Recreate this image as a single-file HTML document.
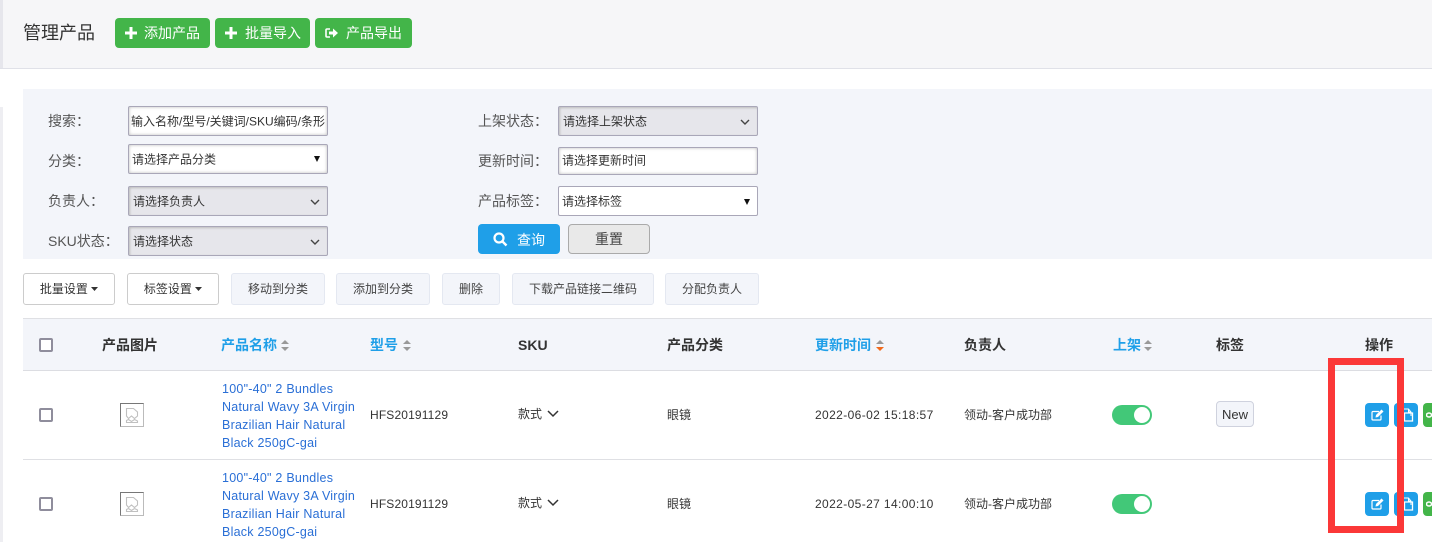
<!DOCTYPE html>
<html lang="zh"><head><meta charset="utf-8"><style>
*{box-sizing:border-box}
html,body{margin:0;padding:0;width:1432px;height:542px;overflow:hidden;background:#fff}
body{position:relative;font-family:"Liberation Sans","Noto Sans CJK SC",sans-serif;font-size:12px;color:#333}
.a{position:absolute;white-space:nowrap}
.g{background:#43b549;color:#fff;border-radius:4px;height:30px;top:18px;font-size:14px;line-height:30px}
.g span{position:absolute;top:0}
.lb{font-size:14px;color:#555;line-height:20px}
.f{position:absolute;width:200px;border:1px solid #a9a7b8;border-radius:2px;font-size:12px;color:#333;background:#fff;box-shadow:inset 0 0 3px #bbb}
.f span{position:absolute;top:50%;transform:translateY(-50%);white-space:nowrap}
.sel{background:#e6e6eb;box-shadow:inset 1px 1px 2px #bbb}
.t{position:absolute;top:273px;height:32px;border:1px solid #e4e8f1;border-radius:3px;background:#f3f5fa;text-align:center;line-height:30px;font-size:12px;color:#444;white-space:nowrap}
.w{background:#fff;border-color:#ccc;color:#333}
.th{position:absolute;top:336px;font-size:14px;font-weight:bold;color:#333;line-height:18px;white-space:nowrap}
.bl{color:#1f9fe8}
.sort{position:absolute;width:8px;height:11px;top:340px}
.sort:before,.sort:after{content:"";position:absolute;left:0;border-left:4px solid transparent;border-right:4px solid transparent}
.sort:before{top:0;border-bottom:4.5px solid #999}
.sort:after{bottom:0;border-top:4.5px solid #999}
.sort.o:after{border-top-color:#f26a1b}
.cb{position:absolute;left:39px;width:14px;height:14px;border:2px solid #8f8d9c;border-radius:2px;background:#fff}
.nm{position:absolute;left:222px;width:140px;font-size:12.5px;letter-spacing:.24px;line-height:18px;color:#2a6fd6;white-space:nowrap}
.c{position:absolute;font-size:12px;color:#333;line-height:18px;white-space:nowrap}
.d{letter-spacing:.38px}
.sw{position:absolute;left:1112px;width:40px;height:20px;border-radius:10px;background:#42c878}
.sw:after{content:"";position:absolute;right:2px;top:2px;width:16px;height:16px;border-radius:50%;background:#fff}
.op{position:absolute;width:24px;height:24px;border-radius:4px;background:#1f9fe8}
.line{position:absolute;left:23px;width:1409px;height:1px;background:#dfe0e4}
.ic{position:absolute;left:120px;width:24px;height:24px}
</style></head><body>
<div class="a" style="left:0;top:0;width:1432px;height:69px;background:#f6f6f8;border-bottom:1px solid #e0e1e8"></div>
<div class="a" style="left:0;top:0;width:3px;height:68px;background:#e6e6ec"></div>
<div class="a" style="left:0;top:107px;width:3px;height:435px;background:#eeeef2"></div>
<div class="a" style="left:23px;top:21px;font-size:18px;line-height:24px;color:#333">管理产品</div>

<div class="a g" style="left:115px;width:95px"><svg class="a" style="left:10px;top:9px" width="12" height="12"><path d="M0 6H12M6 0V12" stroke="#fff" stroke-width="3"/></svg><span style="left:29px">添加产品</span></div>
<div class="a g" style="left:215px;width:95px"><svg class="a" style="left:10px;top:9px" width="12" height="12"><path d="M0 6H12M6 0V12" stroke="#fff" stroke-width="3"/></svg><span style="left:30px">批量导入</span></div>
<div class="a g" style="left:315px;width:97px"><svg class="a" style="left:10px;top:9px" width="14" height="12"><path d="M5 2H2Q1 2 1 3V9Q1 10 2 10H5" fill="none" stroke="#fff" stroke-width="1.6"/><path d="M4 4.5H8V1.5L13 6L8 10.500V7.500H4Z" fill="#fff"/></svg><span style="left:31px">产品导出</span></div>

<div class="a" style="left:23px;top:89px;width:1409px;height:170px;background:#f3f5fa"></div>
<div class="a lb" style="left:48px;top:111px">搜索：</div>
<div class="a lb" style="left:48px;top:151px">分类：</div>
<div class="a lb" style="left:48px;top:191px">负责人：</div>
<div class="a lb" style="left:48px;top:231px">SKU状态：</div>
<div class="a lb" style="left:478px;top:111px">上架状态：</div>
<div class="a lb" style="left:478px;top:151px">更新时间：</div>
<div class="a lb" style="left:478px;top:191px">产品标签：</div>

<div class="f" style="left:128px;top:106px;height:30px;overflow:hidden"><span style="left:2px;width:194px;overflow:hidden">输入名称/型号/关键词/SKU编码/条形码</span></div>
<div class="f" style="left:128px;top:144px;height:30px"><span style="left:3px">请选择产品分类</span><svg class="a" style="right:7px;top:11px" width="6" height="6"><path d="M0 0H6L3 6Z" fill="#111"/></svg></div>
<div class="f sel" style="left:128px;top:186px;height:30px"><span style="left:4px">请选择负责人</span><svg class="a" style="right:7px;top:12px" width="10" height="7"><path d="M1 1L5 5L9 1" fill="none" stroke="#444" stroke-width="1.400"/></svg></div>
<div class="f sel" style="left:128px;top:226px;height:30px"><span style="left:4px">请选择状态</span><svg class="a" style="right:7px;top:12px" width="10" height="7"><path d="M1 1L5 5L9 1" fill="none" stroke="#444" stroke-width="1.400"/></svg></div>
<div class="f sel" style="left:558px;top:106px;height:30px"><span style="left:4px">请选择上架状态</span><svg class="a" style="right:7px;top:12px" width="10" height="7"><path d="M1 1L5 5L9 1" fill="none" stroke="#444" stroke-width="1.400"/></svg></div>
<div class="f" style="left:558px;top:147px;height:28px"><span style="left:3px;margin-top:-1px">请选择更新时间</span></div>
<div class="f" style="left:558px;top:186px;height:30px;box-shadow:none"><span style="left:3px">请选择标签</span><svg class="a" style="right:7px;top:12px" width="6" height="6"><path d="M0 0H6L3 6Z" fill="#111"/></svg></div>

<div class="a" style="left:478px;top:224px;width:82px;height:30px;background:#1f9fe8;border-radius:4px;color:#fff;font-size:14px;line-height:30px"><svg class="a" style="left:15px;top:8px" width="15" height="15"><circle cx="6" cy="6" r="4.500" fill="none" stroke="#fff" stroke-width="2.200"/><path d="M9.500 9.500L13.500 13.500" stroke="#fff" stroke-width="2.400"/></svg><span style="position:absolute;left:39px;top:1px">查询</span></div>
<div class="a" style="left:568px;top:224px;width:82px;height:30px;background:#e9e9e9;border:1px solid #aaa;border-radius:4px;color:#444;font-size:14px;line-height:29px;text-align:center">重置</div>

<div class="t w" style="left:23px;width:92px">批量设置 <svg width="7" height="4" style="vertical-align:2px"><path d="M0 0H7L3.500 4Z" fill="#333"/></svg></div>
<div class="t w" style="left:127px;width:92px">标签设置 <svg width="7" height="4" style="vertical-align:2px"><path d="M0 0H7L3.500 4Z" fill="#333"/></svg></div>
<div class="t" style="left:231px;width:94px">移动到分类</div>
<div class="t" style="left:336px;width:94px">添加到分类</div>
<div class="t" style="left:442px;width:58px">删除</div>
<div class="t" style="left:512px;width:142px">下载产品链接二维码</div>
<div class="t" style="left:665px;width:94px">分配负责人</div>

<div class="a" style="left:23px;top:318px;width:1409px;height:53px;background:#f3f5fa;border-top:1px solid #dfe0e4;border-bottom:1px solid #dcdde2"></div>
<div class="cb" style="top:338px"></div>
<div class="th" style="left:102px">产品图片</div>
<div class="th bl" style="left:221px">产品名称</div><i class="sort" style="left:281px"></i>
<div class="th bl" style="left:370px">型号</div><i class="sort" style="left:403px"></i>
<div class="th" style="left:518px;font-size:14px">SKU</div>
<div class="th" style="left:667px">产品分类</div>
<div class="th bl" style="left:815px">更新时间</div><i class="sort o" style="left:876px"></i>
<div class="th" style="left:964px">负责人</div>
<div class="th bl" style="left:1113px">上架</div><i class="sort" style="left:1144px"></i>
<div class="th" style="left:1216px">标签</div>
<div class="th" style="left:1365px">操作</div>

<div class="line" style="top:459px"></div>

<div class="cb" style="top:408px"></div>
<svg class="ic" style="top:403px" viewBox="0 0 24 24"><rect x=".5" y=".5" width="23" height="23" fill="#fff" stroke="#bbb"/><path d="M.5 23.500V.5H23.500" fill="none" stroke="#777"/><path d="M6.500 13V5.500H13.500L17.500 9V13L14.500 15.500L11.500 13L8.500 15.500ZM6.500 17.500L8.500 16.500L11.500 18.500L14.500 16.500L17.500 18V19.500H6.500Z" fill="none" stroke="#c0c0c0" stroke-width="1.100"/></svg>
<div class="nm" style="top:380px">100"-40" 2 Bundles<br>Natural Wavy 3A Virgin<br>Brazilian Hair Natural<br>Black 250gC-gai</div>
<div class="c" style="left:370px;top:406px;letter-spacing:.15px">HFS20191129</div>
<div class="c" style="left:518px;top:405px">款式</div>
<svg class="a" style="left:547px;top:410px" width="12" height="8"><path d="M1 1L6 6L11 1" fill="none" stroke="#333" stroke-width="1.500"/></svg>
<div class="c" style="left:667px;top:406px">眼镜</div>
<div class="c d" style="left:815px;top:406px">2022-06-02 15:18:57</div>
<div class="c" style="left:964px;top:406px">领动-客户成功部</div>
<div class="sw" style="top:405px"></div>
<div class="a" style="left:1216px;top:401px;width:38px;height:26px;background:#f3f5fa;border:1px solid #cfd2de;border-radius:4px;text-align:center;line-height:25px;font-size:13px;color:#333">New</div>

<div class="cb" style="top:497px"></div>
<svg class="ic" style="top:492px" viewBox="0 0 24 24"><rect x=".5" y=".5" width="23" height="23" fill="#fff" stroke="#bbb"/><path d="M.5 23.500V.5H23.500" fill="none" stroke="#777"/><path d="M6.500 13V5.500H13.500L17.500 9V13L14.500 15.500L11.500 13L8.500 15.500ZM6.500 17.500L8.500 16.500L11.500 18.500L14.500 16.500L17.500 18V19.500H6.500Z" fill="none" stroke="#c0c0c0" stroke-width="1.100"/></svg>
<div class="nm" style="top:469px">100"-40" 2 Bundles<br>Natural Wavy 3A Virgin<br>Brazilian Hair Natural<br>Black 250gC-gai</div>
<div class="c" style="left:370px;top:495px;letter-spacing:.15px">HFS20191129</div>
<div class="c" style="left:518px;top:494px">款式</div>
<svg class="a" style="left:547px;top:499px" width="12" height="8"><path d="M1 1L6 6L11 1" fill="none" stroke="#333" stroke-width="1.500"/></svg>
<div class="c" style="left:667px;top:495px">眼镜</div>
<div class="c d" style="left:815px;top:495px">2022-05-27 14:00:10</div>
<div class="c" style="left:964px;top:495px">领动-客户成功部</div>
<div class="sw" style="top:494px"></div>

<div class="op" style="left:1365px;top:403px"><svg class="a" style="left:6px;top:6px" width="13" height="12"><path d="M8 2.500H2Q1 2.500 1 3.500V10Q1 11 2 11H9Q10 11 10 10V6.500" fill="none" stroke="#fff" stroke-width="1.200"/><path d="M4.500 8.500L5 6L10.500 .5L12.500 2.500L7 8Z" fill="#fff"/></svg></div>
<div class="op" style="left:1394px;top:403px"><svg class="a" style="left:6px;top:3px" width="14" height="16"><path d="M1 3H8.500L11 6V10M8.500 3V6H11" fill="none" stroke="#fff" stroke-width="1"/><path d="M4.500 8H12.500V16H4.500Z" transform="translate(0 -1)" fill="none" stroke="#fff" stroke-width="1.300"/></svg></div>
<div class="op" style="left:1423px;top:403px;background:#43b549;width:20px"><svg class="a" style="left:3px;top:7px" width="6" height="10"><ellipse cx="3" cy="5" rx="2.500" ry="2" fill="none" stroke="#fff" stroke-width="1.500"/></svg></div>
<div class="op" style="left:1365px;top:492px"><svg class="a" style="left:6px;top:6px" width="13" height="12"><path d="M8 2.500H2Q1 2.500 1 3.500V10Q1 11 2 11H9Q10 11 10 10V6.500" fill="none" stroke="#fff" stroke-width="1.200"/><path d="M4.500 8.500L5 6L10.500 .5L12.500 2.500L7 8Z" fill="#fff"/></svg></div>
<div class="op" style="left:1394px;top:492px"><svg class="a" style="left:6px;top:3px" width="14" height="16"><path d="M1 3H8.500L11 6V10M8.500 3V6H11" fill="none" stroke="#fff" stroke-width="1"/><path d="M4.500 8H12.500V16H4.500Z" transform="translate(0 -1)" fill="none" stroke="#fff" stroke-width="1.300"/></svg></div>
<div class="op" style="left:1423px;top:492px;background:#43b549;width:20px"><svg class="a" style="left:3px;top:7px" width="6" height="10"><ellipse cx="3" cy="5" rx="2.500" ry="2" fill="none" stroke="#fff" stroke-width="1.500"/></svg></div>

<div class="a" style="left:1328px;top:358px;width:76px;height:175px;border:7px solid #fb3838"></div>
</body></html>
